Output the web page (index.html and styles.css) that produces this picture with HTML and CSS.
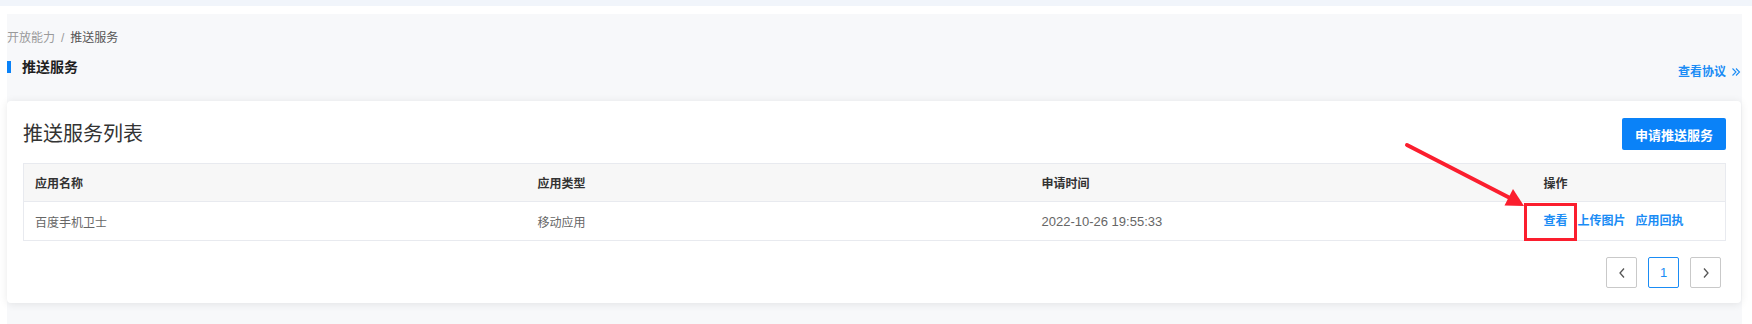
FILE: index.html
```html
<!DOCTYPE html>
<html lang="zh-CN">
<head>
    <meta charset="UTF-8">
    <meta name="viewport" content="width=device-width, initial-scale=1.0">
    <title>推送服务 - 开放能力</title>
    <link rel="stylesheet" href="styles.css">
</head>
<body>
    <div class="topbar"></div>
    <div class="wrap">
        <div class="panel">
            <div class="crumbs">
                <span class="crumb-parent">开放能力</span><span class="crumb-sep">/</span><span class="crumb-current">推送服务</span>
            </div>
            <div class="page-head">
                <h2 class="page-title">推送服务</h2>
                <a class="agreement" href="#">查看协议
                    <svg width="10" height="10" viewBox="0 0 10 10"><path d="M1.5 1.5 L5 5 L1.5 8.5 M5 1.5 L8.5 5 L5 8.5" fill="none" stroke="#1a8cf5" stroke-width="1.1"/></svg>
                </a>
            </div>

            <div class="card">
                <div class="card-head">
                    <h3 class="card-title">推送服务列表</h3>
                    <button class="btn-primary">申请推送服务</button>
                </div>

                <table class="list">
                    <colgroup>
                        <col class="col-name">
                        <col class="col-type">
                        <col class="col-time">
                        <col>
                    </colgroup>
                    <thead>
                        <tr>
                            <th>应用名称</th>
                            <th>应用类型</th>
                            <th>申请时间</th>
                            <th>操作</th>
                        </tr>
                    </thead>
                    <tbody>
                        <tr>
                            <td>百度手机卫士</td>
                            <td>移动应用</td>
                            <td class="date">2022-10-26 19:55:33</td>
                            <td>
                                <div class="actions">
                                    <a href="#" class="act act-view">查看<span class="mark-box"></span></a>
                                    <a href="#" class="act">上传图片</a>
                                    <a href="#" class="act">应用回执</a>
                                </div>
                            </td>
                        </tr>
                    </tbody>
                </table>

                <div class="pager">
                    <button class="page-btn">
                        <svg width="8" height="12" viewBox="0 0 8 12"><path d="M6 1.5 L2 6 L6 10.5" fill="none" stroke="#555" stroke-width="1.3"/></svg>
                    </button>
                    <button class="page-btn active">1</button>
                    <button class="page-btn">
                        <svg width="8" height="12" viewBox="0 0 8 12"><path d="M2 1.5 L6 6 L2 10.5" fill="none" stroke="#555" stroke-width="1.3"/></svg>
                    </button>
                </div>
            </div>
        </div>
    </div>

    <!-- annotation arrow pointing at 查看 -->
    <svg class="annot-arrow" width="130" height="76" viewBox="0 0 130 76">
        <line x1="7" y1="7" x2="110" y2="60" stroke="#fb1e2e" stroke-width="4" stroke-linecap="round"/>
        <polygon points="124,68 104.5,67.5 113,51" fill="#fb1e2e"/>
    </svg>
</body>
</html>
```

FILE: styles.css
```css
body {
    margin: 0;
    background: #fff;
    font-family: "Liberation Sans", "Noto Sans CJK SC", sans-serif;
    color: #333;
    position: relative;
    overflow: hidden;
}
.topbar {
    height: 6px;
    background: #f1f5fb;
}
.wrap {
    padding: 8px 10px 0 7px;
}
.panel {
    background: #f7f8fa;
    padding: 14px 1px 22px 0;
}
.crumbs {
    font-size: 12px;
    line-height: 20px;
    color: #9a9a9a;
}
.crumb-sep {
    margin: 0 6px;
}
.crumb-current {
    color: #555;
}
.page-head {
    display: flex;
    justify-content: space-between;
    align-items: flex-end;
    margin-top: 13px;
    margin-bottom: 19px;
}
.page-title {
    margin: 0 0 9px 0;
    font-size: 14px;
    line-height: 20px;
    font-weight: bold;
    color: #1f1f1f;
    border-left: 4px solid #0a82f8;
    padding-left: 11px;
    height: 12px;
    display: flex;
    align-items: center;
}
.agreement {
    font-size: 12px;
    line-height: 20px;
    font-weight: bold;
    color: #1a8cf5;
    text-decoration: none;
    display: flex;
    align-items: center;
    gap: 5px;
}
.card {
    background: #fff;
    border-radius: 4px;
    box-shadow: 0 1px 8px rgba(0, 0, 0, 0.09);
    padding: 17px 15px 15px 16px;
}
.card-head {
    display: flex;
    justify-content: space-between;
    align-items: center;
    margin-bottom: 13px;
}
.card-title {
    margin: 0;
    font-size: 20px;
    line-height: 28px;
    font-weight: normal;
    color: #333;
}
.btn-primary {
    width: 104px;
    height: 32px;
    border: none;
    border-radius: 2px;
    background: #0a82f8;
    color: #fff;
    font-family: inherit;
    font-size: 13px;
    font-weight: bold;
}
.list {
    width: 100%;
    border-collapse: collapse;
    table-layout: fixed;
    font-size: 12px;
}
.col-name { width: 503px; }
.col-type { width: 504px; }
.col-time { width: 502px; }
.list th,
.list td {
    border-top: 1px solid #e8eaef;
    border-bottom: 1px solid #e8eaef;
    text-align: left;
    padding: 0 11px;
    height: 37px;
}
.list th:first-child,
.list td:first-child {
    border-left: 1px solid #e8eaef;
}
.list th:last-child,
.list td:last-child {
    border-right: 1px solid #e8eaef;
}
.list th {
    background: #f7f7f7;
    font-weight: bold;
    color: #333;
}
.list td {
    color: #666;
    height: 38px;
}
.list td.date {
    font-size: 13px;
}
.actions {
    display: flex;
    gap: 10px;
    line-height: 20px;
}
.act {
    color: #1a8cf5;
    font-weight: bold;
    text-decoration: none;
}
.act-view {
    position: relative;
}
.mark-box {
    position: absolute;
    left: -20px;
    right: -9px;
    top: -8px;
    bottom: -10px;
    border: 3px solid #fb1e2e;
}
.pager {
    display: flex;
    justify-content: flex-end;
    gap: 11px;
    margin-top: 16px;
    margin-right: 5px;
}
.page-btn {
    width: 31px;
    height: 31px;
    border: 1px solid #c9c9c9;
    border-radius: 2px;
    background: #fff;
    color: #1a8cf5;
    font-family: inherit;
    font-size: 13px;
    display: flex;
    align-items: center;
    justify-content: center;
    padding: 0;
}
.page-btn.active {
    border-color: #1a8cf5;
}
.annot-arrow {
    position: absolute;
    left: 1400px;
    top: 138px;
}
```
